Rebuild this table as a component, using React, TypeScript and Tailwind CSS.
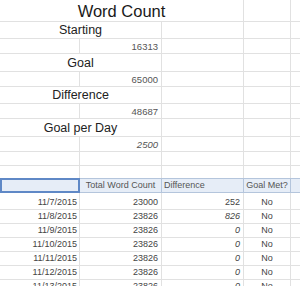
import React from "react";

const GRID = "border-[#e1e1e1]";

function LabelRow({ h, text }: { h: string; text: string }) {
  return (
    <div className={`flex ${h} border-b ${GRID}`}>
      <div className={`w-[162px] shrink-0 border-r ${GRID} flex items-center justify-center text-[12.5px] text-[#222] pt-[1px]`}>
        {text}
      </div>
      <div className={`w-[82px] shrink-0 border-r ${GRID}`} />
      <div className={`w-[47px] shrink-0 border-r ${GRID}`} />
      <div className="flex-1" />
    </div>
  );
}

function ValueRow({ value, italic }: { value: string; italic?: boolean }) {
  return (
    <div className={`flex h-[15px] border-b ${GRID}`}>
      <div className={`w-[80px] shrink-0 border-r ${GRID}`} />
      <div
        className={`w-[82px] shrink-0 border-r ${GRID} flex items-end justify-end pr-[3px] text-[9.5px] leading-[12px] text-[#555] ${italic ? "italic" : ""}`}
      >
        {value}
      </div>
      <div className={`w-[82px] shrink-0 border-r ${GRID}`} />
      <div className={`w-[47px] shrink-0 border-r ${GRID}`} />
      <div className="flex-1" />
    </div>
  );
}

function EmptyRow({ h, border = true }: { h: string; border?: boolean }) {
  return (
    <div className={`flex ${h} ${border ? `border-b ${GRID}` : ""}`}>
      <div className={`w-[80px] shrink-0 border-r ${GRID}`} />
      <div className={`w-[82px] shrink-0 border-r ${GRID}`} />
      <div className={`w-[82px] shrink-0 border-r ${GRID}`} />
      <div className={`w-[47px] shrink-0 border-r ${GRID}`} />
      <div className="flex-1" />
    </div>
  );
}

const data: { date: string; total: string; diff: string; italic: boolean }[] = [
  { date: "11/7/2015", total: "23000", diff: "252", italic: false },
  { date: "11/8/2015", total: "23826", diff: "826", italic: true },
  { date: "11/9/2015", total: "23826", diff: "0", italic: true },
  { date: "11/10/2015", total: "23826", diff: "0", italic: true },
  { date: "11/11/2015", total: "23826", diff: "0", italic: true },
  { date: "11/12/2015", total: "23826", diff: "0", italic: true },
  { date: "11/13/2015", total: "23826", diff: "0", italic: true },
];

export default function App() {
  return (
    <div
      className="w-[300px] h-[286px] overflow-hidden bg-white"
      style={{ fontFamily: '"Liberation Sans", Arial, sans-serif' }}
    >
      {/* Title row */}
      <div className={`flex h-[22px] border-b ${GRID}`}>
        <div className={`w-[244px] shrink-0 border-r ${GRID} flex items-center justify-center text-[16.5px] text-[#1a1a1a] pt-[1px]`}>
          Word Count
        </div>
        <div className={`w-[47px] shrink-0 border-r ${GRID}`} />
        <div className="flex-1" />
      </div>

      <LabelRow h="h-[17px]" text="Starting" />
      <ValueRow value="16313" />
      <LabelRow h="h-[18px]" text="Goal" />
      <ValueRow value="65000" />
      <LabelRow h="h-[17px]" text="Difference" />
      <ValueRow value="48687" />
      <LabelRow h="h-[18px]" text="Goal per Day" />
      <ValueRow value="2500" italic />
      <EmptyRow h="h-[14px]" />
      <EmptyRow h="h-[12px]" border={false} />

      {/* Header row */}
      <div className="flex h-[15px] bg-[#e6edf7] text-[9px] text-[#555]">
        <div className="w-[80px] shrink-0 border-2 border-[#5f88c6]" />
        <div className="w-[82px] shrink-0 border-y border-r border-[#b4c5dc] flex items-center justify-center">
          Total Word Count
        </div>
        <div className="w-[82px] shrink-0 border-y border-r border-[#b4c5dc] flex items-center pl-[2px]">
          Difference
        </div>
        <div className="w-[47px] shrink-0 border-y border-r border-[#b4c5dc] flex items-center justify-center">
          Goal Met?
        </div>
        <div className="flex-1 border-y border-[#b4c5dc]" />
      </div>

      {data.map((r, i) => (
        <div
          key={r.date}
          className={`flex ${i === 0 ? "h-[17px]" : "h-[14px]"} border-b ${GRID} text-[9px] leading-[11px] text-[#444]`}
        >
          <div className={`w-[80px] shrink-0 border-r ${GRID} flex items-end justify-end pr-[2px] pb-[1px]`}>
            {r.date}
          </div>
          <div className={`w-[82px] shrink-0 border-r ${GRID} flex items-end justify-end pr-[3px] pb-[1px]`}>
            {r.total}
          </div>
          <div
            className={`w-[82px] shrink-0 border-r ${GRID} flex items-end justify-end pr-[3px] pb-[1px] ${r.italic ? "italic" : ""}`}
          >
            {r.diff}
          </div>
          <div className={`w-[47px] shrink-0 border-r ${GRID} flex items-end justify-center pb-[1px]`}>
            No
          </div>
          <div className="flex-1" />
        </div>
      ))}
    </div>
  );
}
